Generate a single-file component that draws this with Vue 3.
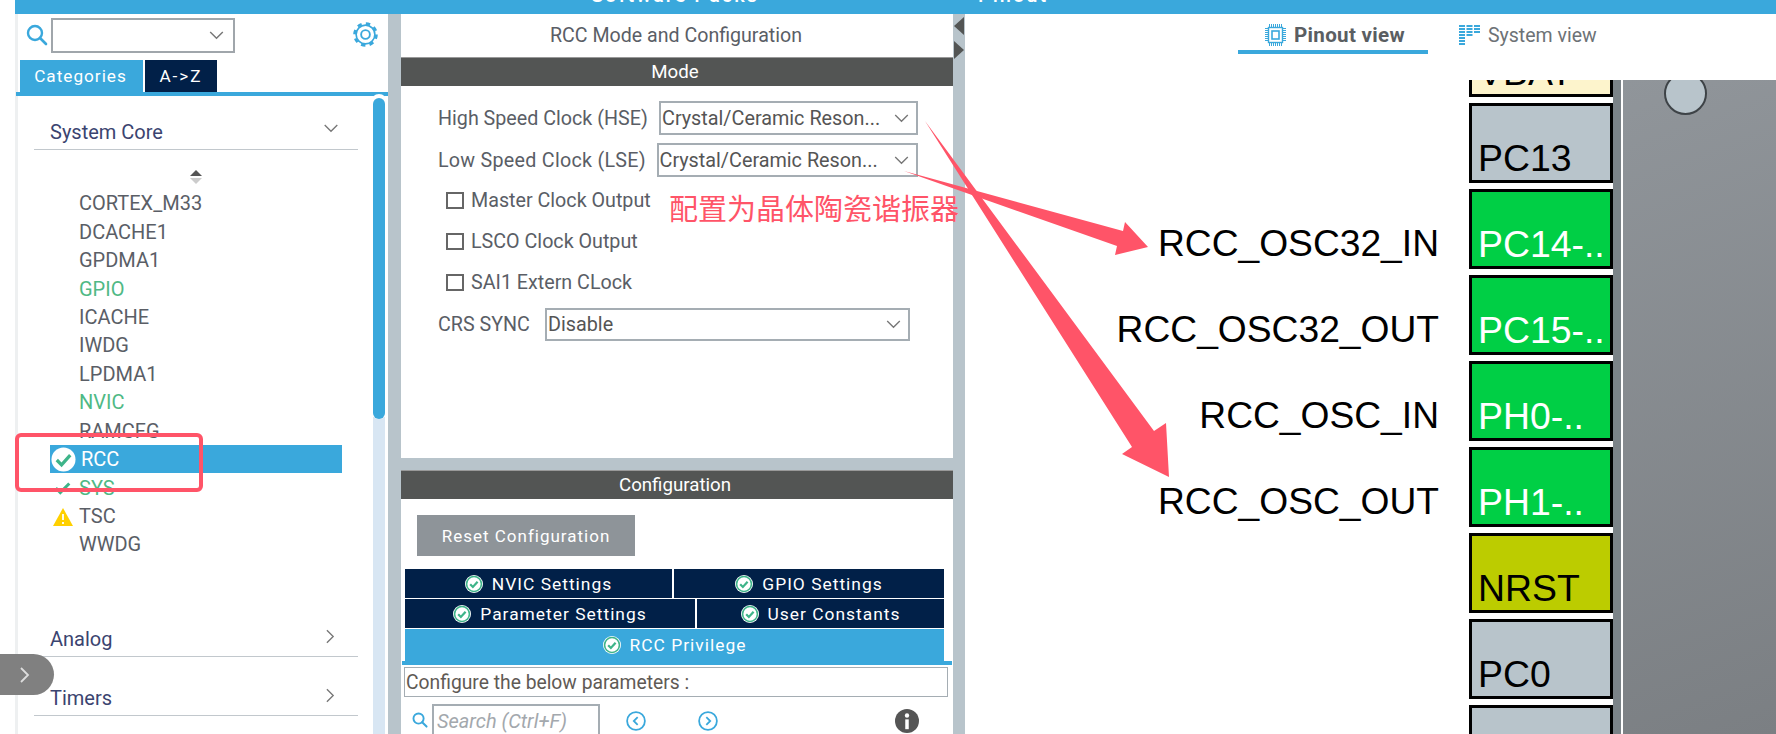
<script setup>
const listItems = [
  { name: 'CORTEX_M33' }, { name: 'DCACHE1' }, { name: 'GPDMA1' },
  { name: 'GPIO', green: true }, { name: 'ICACHE' }, { name: 'IWDG' }, { name: 'LPDMA1' },
  { name: 'NVIC', green: true }, { name: 'RAMCFG' },
  { name: 'RCC', sel: true, icon: 'circle' }, { name: 'SYS', green: true, icon: 'check' },
  { name: 'TSC', icon: 'warn' }, { name: 'WWDG' }
]
const pins = [
  { name: 'VBAT', cls: 'cream' },
  { name: 'PC13', cls: 'grey' },
  { name: 'PC14-..', cls: 'green', label: 'RCC_OSC32_IN' },
  { name: 'PC15-..', cls: 'green', label: 'RCC_OSC32_OUT' },
  { name: 'PH0-..', cls: 'green', label: 'RCC_OSC_IN' },
  { name: 'PH1-..', cls: 'green', label: 'RCC_OSC_OUT' },
  { name: 'NRST', cls: 'olive' },
  { name: 'PC0', cls: 'grey' },
  { name: '', cls: 'grey' }
]
const checks = ['Master Clock Output', 'LSCO Clock Output', 'SAI1 Extern CLock']
</script>

<template>
  <div class="app">
    <div class="topbar">
      <span class="top-a">Software Packs</span>
      <span class="top-b">Pinout</span>
    </div>
    <div class="main">
      <aside class="left">
        <div class="search-row">
          <svg class="ic-search" viewBox="0 0 22 22"><circle cx="9" cy="9" r="7" fill="none" stroke="#3aa8dc" stroke-width="2.4"/><path d="M14 14l6 6" stroke="#3aa8dc" stroke-width="2.6" stroke-linecap="round"/></svg>
          <div class="combo">
            <svg class="chev" viewBox="0 0 16 10"><path d="M1 1l7 7 7-7" fill="none" stroke="#777" stroke-width="1.6"/></svg>
          </div>
          <svg class="ic-gear" viewBox="0 0 24 24">
            <circle cx="12" cy="12" r="9" fill="none" stroke="#3aa8dc" stroke-width="1.6"/>
            <circle cx="12" cy="12" r="10.5" fill="none" stroke="#3aa8dc" stroke-width="2.6" stroke-dasharray="4.2 4.05"/>
            <circle cx="12" cy="12" r="4.2" fill="none" stroke="#3aa8dc" stroke-width="1.8"/>
          </svg>
        </div>
        <div class="cat-tabs">
          <div class="cat on">Categories</div>
          <div class="cat az">A-&gt;Z</div>
        </div>
        <div class="bluerule"></div>
        <div class="left-body">
          <div class="tree">
            <div class="section first">
              <span>System Core</span>
              <svg class="sec-chev" viewBox="0 0 16 10"><path d="M1 1l7 7 7-7" fill="none" stroke="#777" stroke-width="1.5"/></svg>
            </div>
            <div class="sort"><i class="up"></i><i class="down"></i></div>
            <ul class="list">
              <li v-for="it in listItems" :key="it.name" :class="{ sel: it.sel, green: it.green }">
                <svg v-if="it.icon === 'circle'" class="ic-l big" viewBox="0 0 26 26"><circle cx="13" cy="13" r="12.5" fill="#fff"/><path d="M6 13.5l5 5 9-10" fill="none" stroke="#3eb489" stroke-width="3.4"/></svg>
                <svg v-if="it.icon === 'check'" class="ic-l" viewBox="0 0 20 20"><path d="M2 10l5 5 10-10" fill="none" stroke="#3eb489" stroke-width="3.4"/></svg>
                <svg v-if="it.icon === 'warn'" class="ic-l" viewBox="0 0 20 18"><path d="M10 0l10 18H0z" fill="#ffd000"/><path d="M10 6v6M10 14v2" stroke="#fff" stroke-width="1.8"/></svg>
                <span>{{ it.name }}</span>
              </li>
            </ul>
            <div class="section analog">
              <span>Analog</span>
              <svg class="sec-r" viewBox="0 0 10 16"><path d="M1 1l7 7-7 7" fill="none" stroke="#777" stroke-width="1.5"/></svg>
            </div>
            <div class="section">
              <span>Timers</span>
              <svg class="sec-r" viewBox="0 0 10 16"><path d="M1 1l7 7-7 7" fill="none" stroke="#777" stroke-width="1.5"/></svg>
            </div>
          </div>
          <div class="track"><div class="thumb"></div></div>
        </div>
      </aside>

      <div class="strip s1"></div>

      <section class="mid">
        <div class="mid-top">
          <div class="mid-title">RCC Mode and Configuration</div>
          <div class="bar">Mode</div>
          <div class="form">
            <div class="frow r1">
              <label class="lab hse">High Speed Clock (HSE)</label>
              <div class="sel-box w1"><span>Crystal/Ceramic Reson...</span><svg class="chev2" viewBox="0 0 16 10"><path d="M1 1l7 7 7-7" fill="none" stroke="#777" stroke-width="1.5"/></svg></div>
            </div>
            <div class="frow r2">
              <label class="lab lse">Low Speed Clock (LSE)</label>
              <div class="sel-box w2"><span>Crystal/Ceramic Reson...</span><svg class="chev2" viewBox="0 0 16 10"><path d="M1 1l7 7 7-7" fill="none" stroke="#777" stroke-width="1.5"/></svg></div>
            </div>
            <div v-for="c in checks" :key="c" class="crow">
              <i class="box"></i><span>{{ c }}</span>
            </div>
            <div class="frow r3">
              <label class="lab crs">CRS SYNC</label>
              <div class="sel-box w3"><span>Disable</span><svg class="chev2" viewBox="0 0 16 10"><path d="M1 1l7 7 7-7" fill="none" stroke="#777" stroke-width="1.5"/></svg></div>
            </div>
          </div>
        </div>
        <div class="mid-bot">
          <div class="bar">Configuration</div>
          <div class="reset">Reset Configuration</div>
          <div class="trow">
            <div class="tb t1"><svg class="tick" viewBox="0 0 16 16"><circle cx="8" cy="8" r="8" fill="#fff"/><circle cx="8" cy="8" r="6.6" fill="none" stroke="#3eb489" stroke-width="1.4"/><path d="M4.6 8.2l2.4 2.4 4.2-4.6" fill="none" stroke="#3eb489" stroke-width="2"/></svg><span>NVIC Settings</span></div>
            <div class="tb t2"><svg class="tick" viewBox="0 0 16 16"><circle cx="8" cy="8" r="8" fill="#fff"/><circle cx="8" cy="8" r="6.6" fill="none" stroke="#3eb489" stroke-width="1.4"/><path d="M4.6 8.2l2.4 2.4 4.2-4.6" fill="none" stroke="#3eb489" stroke-width="2"/></svg><span>GPIO Settings</span></div>
          </div>
          <div class="trow">
            <div class="tb t3"><svg class="tick" viewBox="0 0 16 16"><circle cx="8" cy="8" r="8" fill="#fff"/><circle cx="8" cy="8" r="6.6" fill="none" stroke="#3eb489" stroke-width="1.4"/><path d="M4.6 8.2l2.4 2.4 4.2-4.6" fill="none" stroke="#3eb489" stroke-width="2"/></svg><span>Parameter Settings</span></div>
            <div class="tb t4"><svg class="tick" viewBox="0 0 16 16"><circle cx="8" cy="8" r="8" fill="#fff"/><circle cx="8" cy="8" r="6.6" fill="none" stroke="#3eb489" stroke-width="1.4"/><path d="M4.6 8.2l2.4 2.4 4.2-4.6" fill="none" stroke="#3eb489" stroke-width="2"/></svg><span>User Constants</span></div>
          </div>
          <div class="tb priv"><svg class="tick" viewBox="0 0 16 16"><circle cx="8" cy="8" r="8" fill="#fff"/><circle cx="8" cy="8" r="6.6" fill="none" stroke="#3eb489" stroke-width="1.4"/><path d="M4.6 8.2l2.4 2.4 4.2-4.6" fill="none" stroke="#3eb489" stroke-width="2"/></svg><span>RCC Privilege</span></div>
          <div class="bluerule2"></div>
          <div class="cfg">Configure the below parameters :</div>
          <div class="srow">
            <svg class="ic-s2" viewBox="0 0 22 22"><circle cx="9" cy="9" r="7" fill="none" stroke="#3aa8dc" stroke-width="2.6"/><path d="M14 14l6 6" stroke="#3aa8dc" stroke-width="2.8" stroke-linecap="round"/></svg>
            <div class="sinput">Search (Ctrl+F)</div>
            <svg class="nav n1" viewBox="0 0 18 18"><circle cx="9" cy="9" r="8" fill="none" stroke="#3aa8dc" stroke-width="1.6"/><path d="M10.5 5.5L7 9l3.5 3.5" fill="none" stroke="#3aa8dc" stroke-width="1.6"/></svg>
            <svg class="nav n2" viewBox="0 0 18 18"><circle cx="9" cy="9" r="8" fill="none" stroke="#3aa8dc" stroke-width="1.6"/><path d="M7.5 5.5L11 9l-3.5 3.5" fill="none" stroke="#3aa8dc" stroke-width="1.6"/></svg>
            <svg class="info" viewBox="0 0 22 22"><circle cx="11" cy="11" r="11" fill="#555"/><rect x="9.4" y="9.5" width="3.2" height="9" fill="#fff"/><circle cx="11" cy="6" r="2" fill="#fff"/></svg>
          </div>
        </div>
      </section>

      <div class="strip s2">
        <i class="tri-l"></i>
        <i class="tri-r"></i>
      </div>

      <section class="right">
        <div class="views">
          <div class="view on">
            <svg class="ic-chip" viewBox="0 0 21 22">
              <path d="M1.5 4v14M19.5 4v14" stroke="#3aa8dc" stroke-width="3" stroke-dasharray="1 1"/>
              <path d="M4 1.5h13M4 20.5h13" stroke="#3aa8dc" stroke-width="3" stroke-dasharray="1 1"/>
              <rect x="3.5" y="3.5" width="14" height="15" fill="#fff" stroke="#3aa8dc" stroke-width="1.4"/>
              <rect x="7" y="7" width="7" height="8" fill="none" stroke="#3aa8dc" stroke-width="1.6"/>
            </svg>
            <span>Pinout view</span>
          </div>
          <div class="view">
            <svg class="ic-sys" viewBox="0 0 21 20">
              <path d="M0 1h6M7.5 1h6M15 1h6M0 4h6M7.5 4h6M15 4h6M0 7h6M7.5 7h6M15 7h6M0 10h6M7.5 10h6M0 13h6M0 16h6M0 19h6" stroke="#3aa8dc" stroke-width="1.8"/>
            </svg>
            <span>System view</span>
          </div>
        </div>
        <div class="canvas">
          <div class="pins">
            <div v-for="p in pins" :key="p.name" class="pinrow">
              <div class="pinlabel"><span v-if="p.label">{{ p.label }}</span></div>
              <div class="pin" :class="p.cls"><span>{{ p.name }}</span></div>
            </div>
          </div>
          <div class="chip-edge"></div>
          <div class="chip-gap"></div>
          <div class="chip"><i class="dot"></i></div>
        </div>
      </section>
    </div>

    <div class="redbox"></div>
    <div class="expander">
      <svg viewBox="0 0 10 16"><path d="M1 1l7 7-7 7" fill="none" stroke="#ddd" stroke-width="1.8"/></svg>
    </div>
    <div class="note">配置为晶体陶瓷谐振器</div>
    <svg class="arrows" viewBox="0 0 1776 734">
      <polygon points="904,171 1123,231 1125,222 1148,247 1115,255 1117,246" fill="#ff5468"/>
      <polygon points="925,121 1154,431 1166,423 1169,477 1122,454 1132,447" fill="#ff5468"/>
    </svg>
  </div>
</template>

<style>
html, body { margin: 0; background: #fff; }
</style>

<style scoped>
.app {
  position: relative;
  width: 1776px;
  height: 734px;
  overflow: hidden;
  background: #fff;
  font-family: Roboto, "Liberation Sans", sans-serif;
  color: #5a5e66;
}

.topbar {
  height: 14px;
  margin-left: 15px;
  background: #3aa8dc;
  overflow: hidden;
  color: #fff;
  font-size: 20px;
  line-height: 18px;
  font-weight: 500;
  display: flex;
}
.top-a { width: 387px; flex: none; margin-left: 576px; margin-top: -14px; letter-spacing: 2px; }
.top-b { margin-top: -14px; letter-spacing: 2px; }

.main { display: flex; height: 720px; }

.left {
  width: 371px;
  margin-left: 15px;
  border-left: 3px solid #eef0f1;
  display: flex;
  flex-direction: column;
  flex: none;
}
.search-row { height: 46px; display: flex; }
.ic-search { width: 22px; height: 22px; margin: 10px 0 0 8px; flex: none; }
.combo {
  width: 184px; height: 35px; margin: 4px 0 0 3px;
  border: 2px solid #a0a6ab; box-sizing: border-box;
  display: flex; align-items: center; justify-content: flex-end; padding-right: 9px;
}
.chev { width: 15px; height: 9px; }
.ic-gear { width: 25px; height: 25px; margin: 8px 0 0 118px; flex: none; }
.cat-tabs { display: flex; height: 32px; padding-left: 2px; gap: 2px; }
.cat {
  background: #012048; color: #fff; width: 72px;
  display: flex; align-items: center; justify-content: center;
  font-size: 17.2px; letter-spacing: 1px;
}
.cat.on { background: #3aa8dc; width: 123px; padding-right: 2px; box-sizing: border-box; }
.cat.az { letter-spacing: 2px; }
.bluerule { height: 4px; background: #3aa8dc; margin-left: -2px; }
.left-body { flex: 1; display: flex; min-height: 0; }
.tree { flex: 1; min-width: 0; padding-left: 16px; }
.section {
  width: 324px; height: 59px;
  box-sizing: border-box;
  border-bottom: 1.5px solid #c2c8cd;
  display: flex; justify-content: space-between; align-items: flex-end;
  font-size: 20px; color: #3b4470;
  padding: 0 19px 6px 16px;
}
.section.first { height: 54px; padding-bottom: 6px; }
.section span { line-height: 22px; }
.sec-chev { width: 16px; height: 9px; margin-bottom: 10px; }
.sec-r { width: 9px; height: 15px; margin-bottom: 6px; margin-right: 4px; }
.sort { height: 39px; width: 324px; display: flex; flex-direction: column; align-items: center; padding-top: 20px; box-sizing: border-box; gap: 2px; }
.up { width: 0; height: 0; border: 6px solid transparent; border-top: 0; border-bottom: 6px solid #555; }
.down { width: 0; height: 0; border: 6px solid transparent; border-bottom: 0; border-top: 6px solid #ccc; }
.list { list-style: none; margin: 0; padding: 0 0 0 16px; width: 292px; }
.list li {
  height: 28.45px; display: flex; align-items: center;
  padding-left: 29px; position: relative;
  font-size: 20px; color: #5a5e66; white-space: nowrap;
}
.list li.green { color: #4fb985; }
.list li.sel { background: #3aa8dc; color: #fff; padding-left: 31px; }
.ic-l { position: absolute; left: 3px; top: 6px; width: 20px; height: 18px; }
.ic-l.big { left: 1px; top: 2px; width: 25px; height: 25px; }
.analog { margin-top: 39px; }
.track { width: 12px; margin-right: 4px; background: #d8e6f3; flex: none; }
.thumb { height: 321px; margin-top: 2px; background: #3aa8dc; border-radius: 6px; box-shadow: 0 -2px 0 2px #fff; }

.strip { background: #b8c4cb; flex: none; }
.s1 { width: 13px; margin-left: -1px; }
.s2 { width: 12px; position: relative; }
.tri-l, .tri-r { position: absolute; left: 1px; width: 0; height: 0; border-top: 9px solid transparent; border-bottom: 9px solid transparent; }
.tri-l { top: 3px; border-right: 10px solid #535554; }
.tri-r { top: 27px; border-left: 10px solid #535554; }

.mid { width: 552px; flex: none; display: flex; flex-direction: column; background: #b8c4cb; gap: 12px; }
.mid-top { height: 444px; background: #fff; flex: none; }
.mid-bot { flex: 1; background: #fff; min-height: 0; }
.mid-title { height: 43px; display: flex; align-items: center; justify-content: center; font-size: 19.6px; padding-right: 2px; box-sizing: border-box; }
.bar {
  height: 29px; background: #535554; color: #fff;
  display: flex; align-items: center; justify-content: center; font-size: 18.7px;
  box-sizing: border-box; border-top: 1px solid #999; padding-right: 4px;
}
.form { padding: 15px 0 0 37px; font-size: 19.7px; color: #5a5e66; }
.frow { display: flex; align-items: center; }
.r1 { height: 34px; }
.r2 { height: 34px; margin-top: 8px; }
.r3 { height: 33px; margin-top: 5px; }
.lab { flex: none; white-space: nowrap; }
.hse { width: 221px; }
.lse { width: 218.5px; letter-spacing: .27px; }
.crs { width: 107px; }
.sel-box {
  height: 100%; box-sizing: border-box; border: 2px solid #a5adb3;
  padding: 0 0 0 1px; display: flex; align-items: center; justify-content: space-between;
  color: #555; font-size: 19.8px; white-space: nowrap;
}
.w1 { width: 259px; }
.w2 { width: 261.5px; }
.w3 { width: 365px; }
.chev2 { width: 15px; height: 9px; margin-right: 7px; flex: none; }
.crow { display: flex; align-items: center; height: 41px; padding-left: 8px; gap: 7px; }
.r2 + .crow { margin-top: 3px; }
.box { width: 18px; height: 17px; box-sizing: border-box; border: 2px solid #666; flex: none; }

.reset {
  width: 218px; height: 41px; margin: 16px 0 13px 16px;
  background: #8e9499; color: #fff; font-size: 17px; letter-spacing: 1px;
  display: flex; align-items: center; justify-content: center;
}
.trow { display: flex; gap: 2px; padding-left: 4px; margin-bottom: 1px; }
.tb {
  height: 29px; background: #012048; color: #fff;
  display: flex; align-items: center; justify-content: center; gap: 9px;
  font-size: 17.4px; letter-spacing: 1px; box-sizing: border-box; padding-top: 1px;
}
.t1 { width: 267px; }
.t2 { width: 270px; }
.t3 { width: 290px; }
.t4 { width: 247px; }
.priv { width: 539px; height: 32px; margin-left: 4px; background: #3aa8dc; padding-top: 0; }
.tick { width: 18px; height: 18px; flex: none; }
.bluerule2 { height: 4px; background: #3aa8dc; margin-left: 1px; width: 550px; }
.cfg {
  width: 544px; height: 30px; margin: 2px 0 0 3px; box-sizing: border-box;
  border: 1.5px solid #a5adb3; display: flex; align-items: center; padding-left: 1px;
  font-size: 19.3px; color: #5f5a55;
}
.srow { display: flex; align-items: flex-start; padding: 7px 0 0 11px; height: 30px; }
.ic-s2 { width: 16px; height: 16px; margin-top: 8px; flex: none; }
.sinput {
  width: 168px; height: 40px; margin-left: 4px; box-sizing: border-box; flex: none;
  border: 2px solid #a5adb3; padding: 4px 0 0 3px;
  font-size: 20px; font-style: italic; color: #a3a8ad; line-height: 22px; white-space: nowrap;
}
.nav { width: 20px; height: 20px; flex: none; margin-top: 7px; }
.n1 { margin-left: 26px; }
.n2 { margin-left: 52px; }
.info { width: 24px; height: 24px; margin: 5px 0 0 177px; flex: none; }

.right { flex: 1; min-width: 0; display: flex; flex-direction: column; }
.views { height: 66px; flex: none; display: flex; padding-left: 273px; }
.view {
  display: flex; align-items: center; height: 42px; color: #6d7276;
  font-size: 19.5px; gap: 8px; box-sizing: border-box;
  margin-left: 31px; white-space: nowrap;
}
.view.on {
  margin-left: 0; width: 190px; padding: 5px 0 0 27px; border-bottom: 4px solid #3aa8dc; height: 40px;
  font-weight: 700; font-size: 20.6px; color: #5a5e62; letter-spacing: .3px;
}
.ic-chip { width: 21px; height: 22px; flex: none; }
.ic-sys { width: 21px; height: 20px; flex: none; }
.canvas { flex: 1; min-height: 0; display: flex; overflow: hidden; }
.pins { width: 648px; flex: none; margin-top: -63px; }
.pinrow { display: flex; height: 80px; margin-bottom: 6px; }
.pinlabel {
  width: 504px; flex: none; box-sizing: border-box; padding: 0 30px 8px 0;
  display: flex; align-items: flex-end; justify-content: flex-end;
  font-family: "Liberation Sans", Arial, sans-serif; font-size: 37.2px; line-height: 36px; color: #000;
  white-space: nowrap;
}
.pin {
  width: 144px; flex: none; box-sizing: border-box;
  border: 3px solid #000; padding: 0 0 4px 6px;
  display: flex; align-items: flex-end;
  font-family: "Liberation Sans", Arial, sans-serif; font-size: 37.4px; line-height: 36px; color: #000;
  white-space: nowrap;
}
.pin.cream { background: #fdf4cc; }
.pin.grey { background: #b8c4cb; }
.pin.green { background: #00cf45; color: #fff; }
.pin.olive { background: #bccc00; }
.chip-edge { width: 8px; flex: none; background: #7b8388; }
.chip-gap { width: 2px; flex: none; background: #fff; }
.chip { flex: 1; background: linear-gradient(160deg, #90959a, #7b7f83); position: relative; overflow: hidden; }
.dot {
  position: absolute; left: 41px; top: -8px; width: 43px; height: 43px; box-sizing: border-box;
  border-radius: 50%; background: #b8c4cb; border: 2px solid #3e4347;
}

.redbox {
  position: absolute; left: 15px; top: 433px; width: 188px; height: 59px; box-sizing: border-box;
  border: 4.5px solid #ff5468; border-radius: 6px;
}
.expander {
  position: absolute; left: 0; top: 654px; width: 54px; height: 41px;
  background: #808080; border-radius: 0 21px 21px 0;
  display: flex; align-items: center; padding-left: 20px; box-sizing: border-box;
}
.expander svg { width: 10px; height: 16px; }
.note {
  position: absolute; left: 669px; top: 189px; font-size: 29px; line-height: 36px; color: #ff5468;
  font-family: "Noto Sans CJK SC", sans-serif; white-space: nowrap;
}
.arrows { position: absolute; left: 0; top: 0; width: 1776px; height: 734px; pointer-events: none; }
</style>
